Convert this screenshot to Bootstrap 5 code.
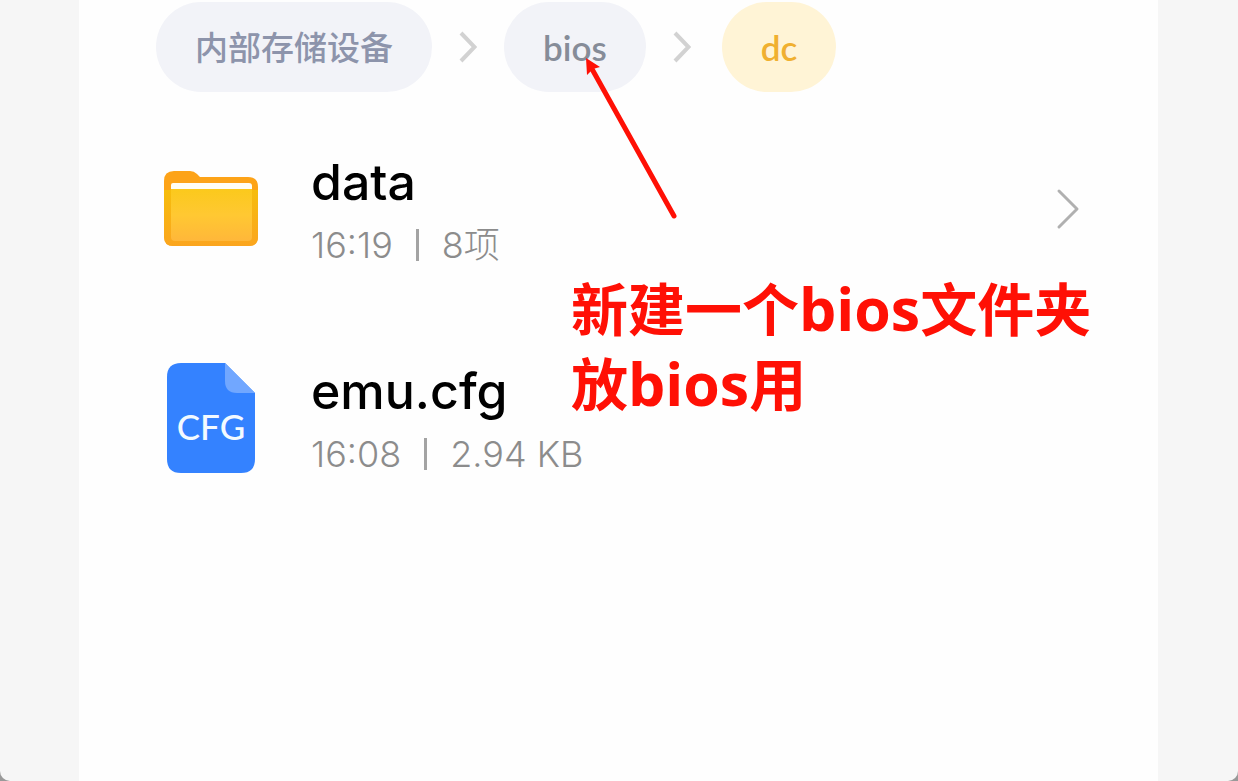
<!DOCTYPE html>
<html lang="zh-CN">
<head>
<meta charset="utf-8">
<meta name="viewport" content="width=device-width, initial-scale=1">
<title>dc</title>
<link href="https://cdn.jsdelivr.net/npm/bootstrap@5.3.0/dist/css/bootstrap.min.css" rel="stylesheet">
<style>
  html { background: #999; }
  body { background: transparent; font-family: Lato, "Noto Sans CJK SC", sans-serif; }
  .frame { background: #f6f6f6; border-radius: 0 0 10px 10px; padding: 0 80px 0 79px; }
  .sheet { background: #fefefe; padding: 2px 78px 0 77px; }
  .crumbs { gap: 27px; }
  .pill { display: flex; align-items: center; height: 90px; padding: 0 39px; background: #f2f3f8; color: #8d94ab; font-size: 33px; font-weight: 500; line-height: 40px; text-decoration: none; white-space: nowrap; }
  .pill-latin { font-size: 35px; font-weight: 600; color: #868c98; }
  .pill-current { background: #fff4d6; color: #f0b030; }
  .files { padding-top: 12px; }
  .file { height: 209px; gap: 53px; padding-left: 8px; color: #000; text-decoration: none; }
  .file-icon { width: 94px; }
  .file-text { padding-top: 8px; font-family: Inter, "Noto Sans CJK SC", sans-serif; }
  .file-name { font-size: 50px; font-weight: 500; line-height: 64px; }
  .file-meta { font-size: 36px; font-weight: 300; line-height: 62px; color: #8c8c8c; gap: 23px; }
  .bar { width: 3px; height: 32px; background: #a3a3a3; }
  .arrow { left: 76px; top: 48px; pointer-events: none; }
  .note { left: 415px; top: 180px; color: #ff1005; font-family: "Open Sans", "Noto Sans CJK SC", sans-serif; font-size: 57px; font-weight: 700; line-height: 75px; white-space: nowrap; }
  .note-latin { font-size: 59px; line-height: 1; }
</style>
</head>
<body>
<div class="frame min-vh-100 d-flex">
  <main class="sheet flex-grow-1">
    <nav aria-label="路径">
      <ol class="crumbs list-unstyled d-flex align-items-center mb-0">
        <li><a class="pill rounded-pill" href="#">内部存储设备</a></li>
        <li class="d-flex" aria-hidden="true"><svg width="18" height="32" viewBox="0 0 18 32" fill="none" stroke="#d2d2d2" stroke-width="4"><path d="M2 2 15.500 16 2 30"/></svg></li>
        <li class="position-relative">
          <a class="pill pill-latin rounded-pill" href="#">bios</a>
          <svg class="arrow position-absolute" width="104" height="176" viewBox="0 0 104 176" aria-hidden="true"><path d="M12 19 94 166" stroke="#ff1005" stroke-width="5" stroke-linecap="round"/><path d="M6 8 20 17 13 19 7 25Z" fill="#ff1005"/></svg>
        </li>
        <li class="d-flex" aria-hidden="true"><svg width="18" height="32" viewBox="0 0 18 32" fill="none" stroke="#d2d2d2" stroke-width="4"><path d="M2 2 15.500 16 2 30"/></svg></li>
        <li class="ps-1"><a class="pill pill-latin pill-current rounded-pill" href="#" aria-current="page">dc</a></li>
      </ol>
    </nav>
    <div class="files position-relative">
      <a class="file d-flex align-items-center" href="#">
        <span class="file-icon d-flex justify-content-center flex-shrink-0">
          <svg width="94" height="75" viewBox="0 0 94 75" aria-hidden="true">
            <defs>
              <linearGradient id="front" x1="0" y1="0" x2="0" y2="1"><stop offset="0" stop-color="#fbc91c"/><stop offset=".5" stop-color="#ffc832"/><stop offset="1" stop-color="#ffb73a"/></linearGradient>
              <linearGradient id="rim" x1="0" y1="0" x2="0" y2="1"><stop offset="0" stop-color="#f6bd0c"/><stop offset="1" stop-color="#fba51e"/></linearGradient>
            </defs>
            <path d="M0 10Q0 0 10 0H26Q30 0 33 3L36 6H84Q94 6 94 16V65Q94 75 84 75H10Q0 75 0 65Z" fill="#fda318"/>
            <path d="M0 19H94V66Q94 75 85 75H9Q0 75 0 66Z" fill="url(#rim)"/>
            <path d="M7 19V14Q7 12 9 12H85Q88 12 88 15V19Z" fill="#fffdf5"/>
            <path d="M7 18H88V66Q88 70 84 70H11Q7 70 7 66Z" fill="url(#front)"/>
          </svg>
        </span>
        <span class="file-text flex-grow-1">
          <span class="file-name d-block">data</span>
          <span class="file-meta d-flex align-items-center"><span>16:19</span><span class="bar"></span><span>8项</span></span>
        </span>
        <svg width="24" height="42" viewBox="0 0 24 42" fill="none" stroke="#b0b0b0" stroke-width="3" stroke-linecap="round" stroke-linejoin="round" aria-hidden="true"><path d="M3 3 21 21 3 39"/></svg>
      </a>
      <a class="file d-flex align-items-center" href="#">
        <span class="file-icon d-flex justify-content-center flex-shrink-0">
          <svg width="88" height="110" viewBox="0 0 88 110" aria-hidden="true">
            <path d="M14 0H58L88 30V96Q88 110 74 110H14Q0 110 0 96V14Q0 0 14 0Z" fill="#3482ff"/>
            <path d="M58 0 88 30H70Q58 30 58 18Z" fill="#71a7ff"/>
            <text x="44" y="77" text-anchor="middle" font-size="35" font-weight="500" fill="#f3faff">CFG</text>
          </svg>
        </span>
        <span class="file-text flex-grow-1">
          <span class="file-name d-block">emu.cfg</span>
          <span class="file-meta d-flex align-items-center"><span>16:08</span><span class="bar"></span><span>2.94 KB</span></span>
        </span>
      </a>
      <p class="note position-absolute mb-0">新建一个<span class="note-latin">bios</span>文件夹<br>放<span class="note-latin">bios</span>用</p>
    </div>
  </main>
</div>
<script src="https://cdn.jsdelivr.net/npm/bootstrap@5.3.0/dist/js/bootstrap.bundle.min.js"></script>
</body>
</html>
